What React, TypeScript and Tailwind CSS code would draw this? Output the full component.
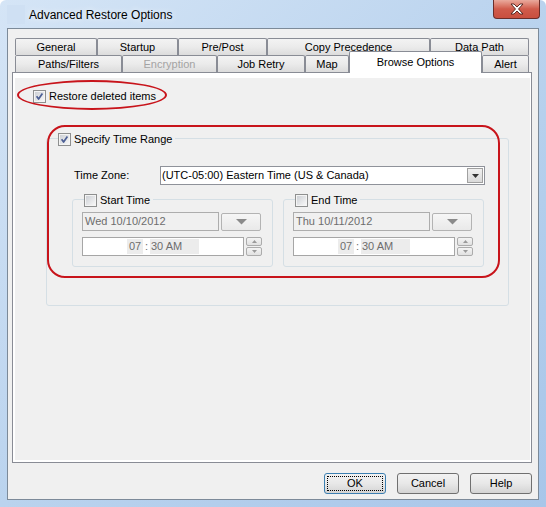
import React from "react";

// Win7-style checkbox glyph
const CheckBox = ({ checked }: { checked?: boolean }) => (
  <svg width="13" height="13" viewBox="0 0 13 13" className="shrink-0">
    <defs>
      <linearGradient id="cbFill" x1="0" y1="0" x2="1" y2="1">
        <stop offset="0" stopColor="#cdd0d5" />
        <stop offset="1" stopColor="#f7f7f7" />
      </linearGradient>
    </defs>
    <rect x="0.5" y="0.5" width="12" height="12" fill="#f4f4f4" stroke="#8e8f8f" />
    <rect x="2" y="2" width="9" height="9" fill="url(#cbFill)" />
    {checked && (
      <path d="M3.6 6.2 L5.6 9 L9.4 3.4" fill="none" stroke="#4c5f95" strokeWidth="1.7" strokeLinejoin="round" />
    )}
  </svg>
);

const DownTriangle = ({ color = "#7d7d7d" }: { color?: string }) => (
  <svg width="11" height="6" viewBox="0 0 11 6">
    <path d="M0 0 H11 L5.5 5.5 Z" fill={color} />
  </svg>
);

const Tab = ({ label, className, disabled }: { label: string; className: string; disabled?: boolean }) => (
  <div
    className={`${className} h-full border border-b-0 border-[#898c95] rounded-t-[2px] bg-gradient-to-b from-[#f3f3f3] via-[#ebebeb] to-[#dcdcdc] flex items-center justify-center text-[11px] ${
      disabled ? "text-[#a3a3a3]" : "text-black"
    }`}
  >
    {label}
  </div>
);

const Button = ({ label, isDefault }: { label: string; isDefault?: boolean }) => (
  <div
    className={`w-[62px] h-[21px] rounded-[3px] border flex items-center justify-center bg-gradient-to-b from-[#f2f2f2] via-[#e8e8e8] to-[#d4d4d4] ${
      isDefault ? "border-[#3c7fb1] p-[2px]" : "border-[#707070]"
    }`}
  >
    {isDefault ? (
      <div className="w-full h-full border border-dotted border-black flex items-center justify-center text-[11px]">
        {label}
      </div>
    ) : (
      <span className="text-[11px]">{label}</span>
    )}
  </div>
);

const Spinner = () => (
  <div className="flex flex-col w-[16px] h-[19px] gap-[1px]">
    {[0, 1].map((i) => (
      <div
        key={i}
        className="flex-1 border border-[#acacac] rounded-[2px] bg-gradient-to-b from-[#f4f4f4] to-[#e1e1e1] flex items-center justify-center"
      >
        <svg width="5" height="3" viewBox="0 0 5 3">
          {i === 0 ? <path d="M0 3 L2.5 0 L5 3 Z" fill="#9a9a9a" /> : <path d="M0 0 L5 0 L2.5 3 Z" fill="#9a9a9a" />}
        </svg>
      </div>
    ))}
  </div>
);

const TimeBox = ({ title, date }: { title: string; date: string }) => (
  <div className="w-[201px] h-[68px] border border-[#d5dfe5] rounded-[3px]">
    <div className="flex items-center gap-[3px] -mt-[7px] ml-[11px] w-fit bg-[#f0f0f0] pr-[3px]">
      <CheckBox />
      <span className="text-[11px] leading-[14px]">{title}</span>
    </div>
    <div className="flex items-start gap-[2px] ml-[9px] mt-[5px]">
      <div className="w-[137px] h-[19px] border border-[#adadad] bg-[#f0f0f0] flex items-center pl-[2px] text-[11px] text-[#6d6d6d]">
        {date}
      </div>
      <div className="w-[40px] h-[18px] mt-[1px] border border-[#b3b3b3] rounded-[2px] bg-gradient-to-b from-[#f6f6f6] to-[#e9e9e9] flex items-center justify-center">
        <DownTriangle color="#8a8a8a" />
      </div>
    </div>
    <div className="flex items-start gap-[2px] ml-[9px] mt-[6px]">
      <div className="w-[162px] h-[19px] border border-[#a6a6a6] bg-white flex items-center pl-[44px] text-[11px] text-[#6d6d6d]">
        <span className="bg-[#ececec] h-[15px] w-[16px] flex items-center justify-center">07</span>
        <span className="w-[7px] text-center">:</span>
        <span className="bg-[#ececec] h-[15px] w-[49px] flex items-center pl-[1px]">30 AM</span>
      </div>
      <Spinner />
    </div>
  </div>
);

export default function App() {
  return (
    <div className="w-[546px] h-[507px] flex flex-col bg-gradient-to-br from-[#d5e5f6] via-[#bad3ee] to-[#a8c6e9] font-['Liberation_Sans',Arial,sans-serif] text-black overflow-hidden rounded-t-[6px]">
      {/* title bar */}
      <div className="h-[28px] flex items-start shrink-0">
        <div className="w-[18px] h-[19px] ml-[7px] mt-[5px] bg-[#cfe0f3]" />
        <div className="ml-[4px] mt-[7px] text-[12px] leading-[16px] text-black [text-shadow:0_0_6px_#ffffff]">
          Advanced Restore Options
        </div>
        <div className="ml-auto mr-[6px] w-[47px] h-[19px] rounded-b-[4px] border border-t-0 border-[#6b2e2a] bg-gradient-to-b from-[#e9aa9d] via-[#d05b4b] to-[#c94f3f] flex items-center justify-center">
          <svg width="14" height="12" viewBox="0 0 14 12">
            <path
              d="M1 1 L4 1 L7 4 L10 1 L13 1 L8.5 6 L13 11 L10 11 L7 8 L4 11 L1 11 L5.5 6 Z"
              fill="#ffffff"
              stroke="#4b1f1b"
              strokeWidth="0.9"
              strokeLinejoin="round"
            />
          </svg>
        </div>
      </div>

      {/* client area */}
      <div className="mx-[7px] mb-[7px] flex-1 border border-[#7c8a99] bg-[#f0f0f0] flex flex-col">
        <div className="ml-[4px] mt-[9px] w-[520px]">
          {/* tab rows */}
          <div className="flex ml-[3px] h-[17px]">
            <Tab label="General" className="w-[82px]" />
            <Tab label="Startup" className="w-[81px]" />
            <Tab label="Pre/Post" className="w-[89px]" />
            <Tab label="Copy Precedence" className="w-[163px]" />
            <Tab label="Data Path" className="w-[99px]" />
          </div>
          <div className="flex ml-[3px] h-[17px] items-end relative z-10">
            <Tab label="Paths/Filters" className="w-[107px]" />
            <Tab label="Encryption" className="w-[95px]" disabled />
            <Tab label="Job Retry" className="w-[88px]" />
            <Tab label="Map" className="w-[44px]" />
            <div className="w-[133px] h-[22px] -mb-[1px] border border-b-0 border-[#898c95] rounded-t-[2px] bg-white flex justify-center pt-[2px] text-[11px]">
              Browse Options
            </div>
            <Tab label="Alert" className="w-[47px]" />
          </div>

          {/* tab panel */}
          <div className="h-[391px] border border-[#898c95] bg-white pt-[5px] pl-[2px] pr-[1px] pb-[2px]">
            <div className="relative h-full bg-[#f0f0f0] pt-[12px]">
              <div className="flex items-center gap-[3px] ml-[18px]">
                <CheckBox checked />
                <span className="text-[11px] leading-[13px]">Restore deleted items</span>
              </div>

              {/* Specify Time Range group */}
              <div className="ml-[31px] mt-[35px] w-[463px] h-[168px] border border-[#d5dfe5] rounded-[3px]">
                <div className="flex items-center gap-[3px] -mt-[7px] ml-[11px] w-fit bg-[#f0f0f0] pr-[3px]">
                  <CheckBox checked />
                  <span className="text-[11px] leading-[14px]">Specify Time Range</span>
                </div>
                <div className="flex items-center mt-[20px] ml-[27px]">
                  <span className="w-[86px] text-[11px]">Time Zone:</span>
                  <div className="w-[325px] h-[19px] border border-[#8f929a] bg-white flex items-center">
                    <span className="flex-1 pl-[1px] text-[11px]">(UTC-05:00) Eastern Time (US &amp; Canada)</span>
                    <div className="w-[16px] h-[15px] mr-[1px] border border-[#a0a0a0] bg-gradient-to-b from-[#f0f0f0] to-[#dadada] flex items-center justify-center">
                      <svg width="7" height="4" viewBox="0 0 7 4">
                        <path d="M0 0 H7 L3.5 4 Z" fill="#333" />
                      </svg>
                    </div>
                  </div>
                </div>
                <div className="flex gap-[10px] mt-[14px] ml-[25px]">
                  <TimeBox title="Start Time" date="Wed 10/10/2012" />
                  <TimeBox title="End Time" date="Thu 10/11/2012" />
                </div>
              </div>

              {/* annotation outlines */}
              <div className="absolute left-[2px] top-[2px] w-[150px] h-[30px] rounded-[50%] border-2 border-[#c8141b]" />
              <div className="absolute left-[32px] top-[47px] w-[453px] h-[153px] rounded-[18px] border-2 border-[#c8141b]" />
            </div>
          </div>
        </div>

        {/* dialog buttons */}
        <div className="flex justify-end gap-[11px] mt-[10px] mr-[6px]">
          <Button label="OK" isDefault />
          <Button label="Cancel" />
          <Button label="Help" />
        </div>
      </div>
    </div>
  );
}
